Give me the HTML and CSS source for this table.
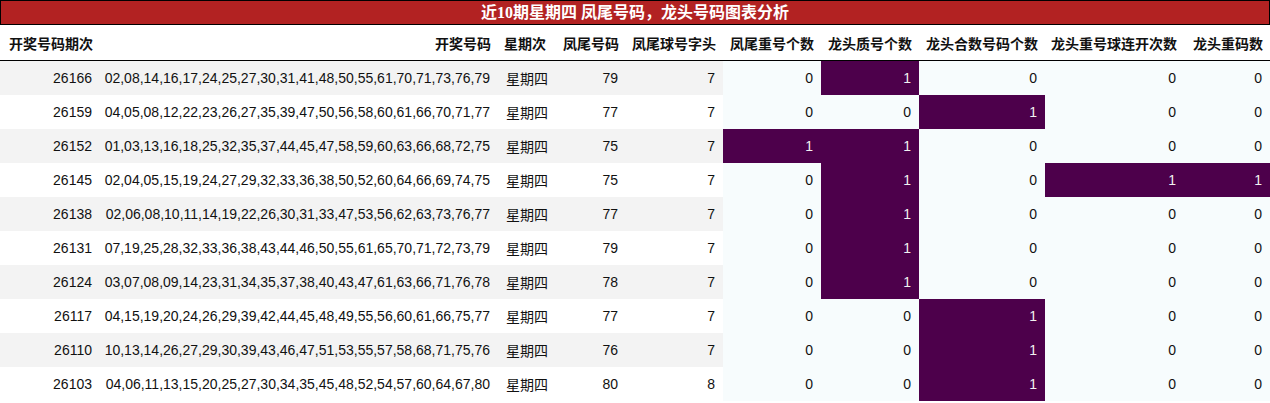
FILE: index.html
```html
<!DOCTYPE html>
<html lang="zh">
<head>
<meta charset="utf-8">
<link rel="stylesheet" href="styles.css">
</head>
<body>
<table class="tbl">
  <caption class="title">近10期星期四 凤尾号码，龙头号码图表分析</caption>
  <colgroup>
    <col class="c1"><col class="c2"><col class="c3"><col class="c4"><col class="c5">
    <col class="c6"><col class="c7"><col class="c8"><col class="c9"><col class="c10">
  </colgroup>
  <thead>
    <tr>
      <th class="left">开奖号码期次</th>
      <th>开奖号码</th>
      <th>星期次</th>
      <th>凤尾号码</th>
      <th>凤尾球号字头</th>
      <th>凤尾重号个数</th>
      <th>龙头质号个数</th>
      <th>龙头合数号码个数</th>
      <th>龙头重号球连开次数</th>
      <th>龙头重码数</th>
    </tr>
  </thead>
  <tbody>
    <tr class="odd"><td>26166</td><td>02,08,14,16,17,24,25,27,30,31,41,48,50,55,61,70,71,73,76,79</td><td class="wk">星期四</td><td>79</td><td>7</td><td class="lo">0</td><td class="hi">1</td><td class="lo">0</td><td class="lo">0</td><td class="lo">0</td></tr>
    <tr><td>26159</td><td>04,05,08,12,22,23,26,27,35,39,47,50,56,58,60,61,66,70,71,77</td><td class="wk">星期四</td><td>77</td><td>7</td><td class="lo">0</td><td class="lo">0</td><td class="hi">1</td><td class="lo">0</td><td class="lo">0</td></tr>
    <tr class="odd"><td>26152</td><td>01,03,13,16,18,25,32,35,37,44,45,47,58,59,60,63,66,68,72,75</td><td class="wk">星期四</td><td>75</td><td>7</td><td class="hi">1</td><td class="hi">1</td><td class="lo">0</td><td class="lo">0</td><td class="lo">0</td></tr>
    <tr><td>26145</td><td>02,04,05,15,19,24,27,29,32,33,36,38,50,52,60,64,66,69,74,75</td><td class="wk">星期四</td><td>75</td><td>7</td><td class="lo">0</td><td class="hi">1</td><td class="lo">0</td><td class="hi">1</td><td class="hi">1</td></tr>
    <tr class="odd"><td>26138</td><td>02,06,08,10,11,14,19,22,26,30,31,33,47,53,56,62,63,73,76,77</td><td class="wk">星期四</td><td>77</td><td>7</td><td class="lo">0</td><td class="hi">1</td><td class="lo">0</td><td class="lo">0</td><td class="lo">0</td></tr>
    <tr><td>26131</td><td>07,19,25,28,32,33,36,38,43,44,46,50,55,61,65,70,71,72,73,79</td><td class="wk">星期四</td><td>79</td><td>7</td><td class="lo">0</td><td class="hi">1</td><td class="lo">0</td><td class="lo">0</td><td class="lo">0</td></tr>
    <tr class="odd"><td>26124</td><td>03,07,08,09,14,23,31,34,35,37,38,40,43,47,61,63,66,71,76,78</td><td class="wk">星期四</td><td>78</td><td>7</td><td class="lo">0</td><td class="hi">1</td><td class="lo">0</td><td class="lo">0</td><td class="lo">0</td></tr>
    <tr><td>26117</td><td>04,15,19,20,24,26,29,39,42,44,45,48,49,55,56,60,61,66,75,77</td><td class="wk">星期四</td><td>77</td><td>7</td><td class="lo">0</td><td class="lo">0</td><td class="hi">1</td><td class="lo">0</td><td class="lo">0</td></tr>
    <tr class="odd"><td>26110</td><td>10,13,14,26,27,29,30,39,43,46,47,51,53,55,57,58,68,71,75,76</td><td class="wk">星期四</td><td>76</td><td>7</td><td class="lo">0</td><td class="lo">0</td><td class="hi">1</td><td class="lo">0</td><td class="lo">0</td></tr>
    <tr><td>26103</td><td>04,06,11,13,15,20,25,27,30,34,35,45,48,52,54,57,60,64,67,80</td><td class="wk">星期四</td><td>80</td><td>8</td><td class="lo">0</td><td class="lo">0</td><td class="hi">1</td><td class="lo">0</td><td class="lo">0</td></tr>
  </tbody>
</table>
</body>
</html>
```

FILE: styles.css
```css
html, body {
  margin: 0;
  padding: 0;
  background: #ffffff;
}

.tbl {
  width: 1270px;
  border-collapse: collapse;
  table-layout: fixed;
  font-family: "Liberation Sans", "Noto Sans CJK SC", sans-serif;
  font-size: 14px;
  color: #111111;
}

.title {
  background: #b22222;
  color: #ffffff;
  border: 1px solid #000000;
  height: 23px;
  line-height: 23px;
  font-family: "Liberation Serif", "Noto Sans CJK SC", serif;
  font-weight: bold;
  font-size: 16px;
  text-align: center;
}

.c1 { width: 100px; }
.c2 { width: 398px; }
.c3 { width: 55px; }
.c4 { width: 73px; }
.c5 { width: 97px; }
.c6 { width: 98px; }
.c7 { width: 98px; }
.c8 { width: 126px; }
.c9 { width: 139px; }
.c10 { width: 86px; }

th {
  height: 35px;
  padding: 0 7px 0 0;
  text-align: right;
  font-weight: bold;
  font-size: 14px;
  color: #111111;
  border-bottom: 1px solid #000000;
  white-space: nowrap;
  vertical-align: middle;
}

th.left {
  text-align: left;
  padding-left: 9px;
}

td {
  height: 34px;
  padding: 0 8px 0 0;
  text-align: right;
  vertical-align: middle;
  white-space: nowrap;
  background: #ffffff;
}

tr.odd td {
  background: #f3f3f3;
}

td.wk {
  text-align: left;
  padding-left: 8px;
}

td.lo, tr.odd td.lo {
  background: #f7fcfd;
  color: #111111;
}

td.hi, tr.odd td.hi {
  background: #4d004b;
  color: #f1f1f1;
}
```
